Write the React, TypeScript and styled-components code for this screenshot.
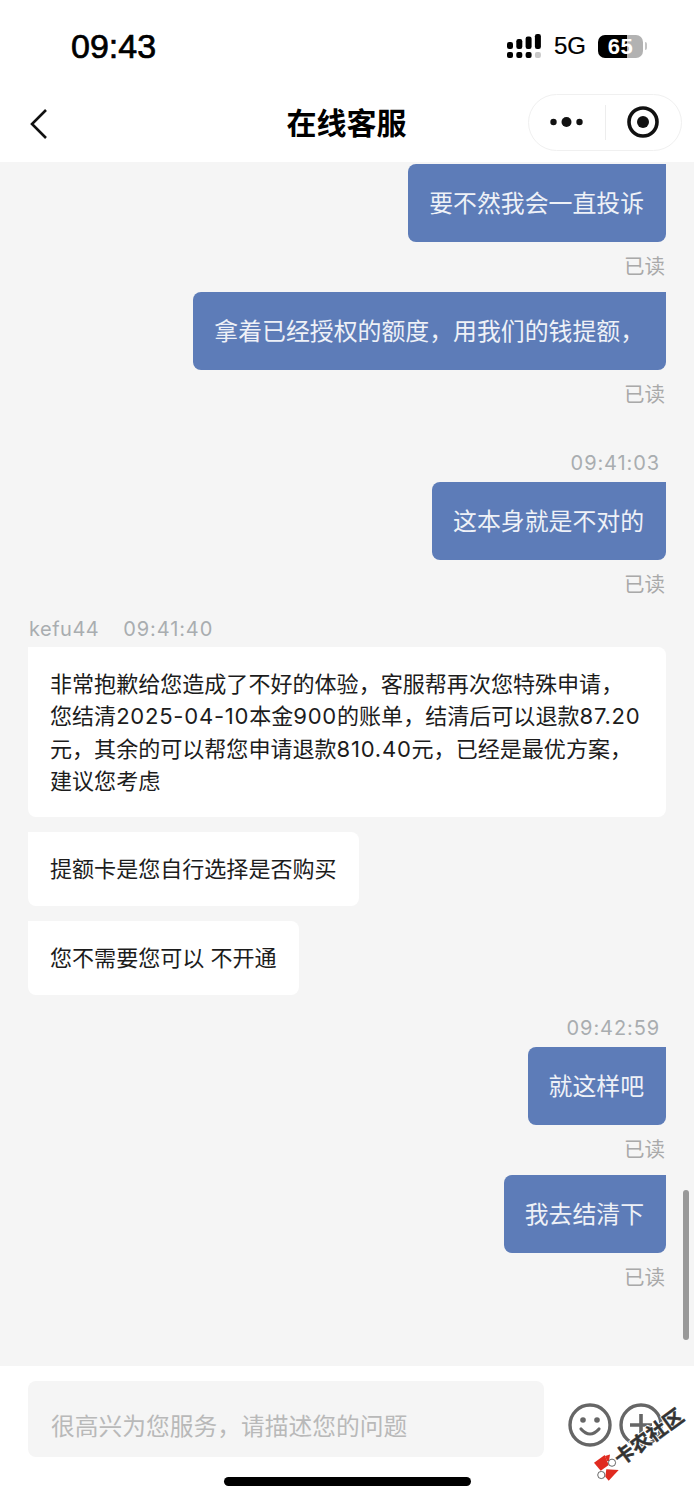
import React from 'react';
import styled, { createGlobalStyle } from 'styled-components';

const Global = createGlobalStyle`
  html, body { margin: 0; padding: 0; background: #fff; }
  * { box-sizing: border-box; }
  body { font-family: "Liberation Sans", "Noto Sans CJK SC", sans-serif; }
`;

const Page = styled.div`
  position: relative;
  width: 694px;
  height: 1500px;
  overflow: hidden;
  display: flex;
  flex-direction: column;
  background: #fff;
`;

const StatusBar = styled.div`
  height: 85px;
  flex: none;
  display: flex;
  align-items: flex-start;
  justify-content: space-between;
  padding: 28px 47px 0 71px;
`;

const Clock = styled.div`
  font-size: 34px;
  line-height: 36px;
  font-weight: 400;
  color: #000;
  -webkit-text-stroke: 0.7px #000;
  font-family: "Liberation Sans", sans-serif;
`;

const StatusRight = styled.div`
  display: flex;
  align-items: center;
  gap: 12px;
  height: 36px;
`;

const NetLabel = styled.span`
  font-size: 24px;
  color: #000;
  line-height: 36px;
  -webkit-text-stroke: 0.2px #000;
`;

const Battery = styled.div`
  position: relative;
  width: 45px;
  height: 23px;
  border-radius: 7px;
  overflow: hidden;
  background: linear-gradient(to right, #000 0 29px, #b2b2b2 29px);
  color: #fff;
  font-size: 22px;
  line-height: 23px;
  font-weight: 700;
  text-align: center;
  letter-spacing: 0.5px;
`;

const BatteryWrap = styled.div`
  display: flex;
  align-items: center;
  gap: 2px;
`;

const BatteryCap = styled.div`
  width: 2px;
  height: 8px;
  border-radius: 0 2px 2px 0;
  background: #c4c4c4;
`;

const NavBar = styled.div`
  position: relative;
  height: 77px;
  flex: none;
  display: flex;
  align-items: center;
  justify-content: space-between;
  padding: 0 12px 0 29px;
`;

const Title = styled.div`
  position: absolute;
  left: 0;
  right: 1px;
  top: 18px;
  text-align: center;
  font-size: 30px;
  line-height: 42px;
  font-weight: 700;
  color: #000;
`;

const Capsule = styled.div`
  width: 154px;
  height: 57px;
  margin-top: -3px;
  border: 1px solid #f0f0f0;
  border-radius: 29px;
  display: flex;
  align-items: center;
`;

const CapsuleSide = styled.div`
  flex: 1;
  height: 100%;
  display: flex;
  align-items: center;
  justify-content: center;
`;

const CapsuleDivider = styled.div`
  width: 1px;
  height: 35px;
  background: #ededed;
`;

const Chat = styled.div`
  flex: 1;
  min-height: 0;
  overflow: hidden;
  background: #f5f5f5;
  padding: 2px 28px 0;
  display: flex;
  flex-direction: column;
`;

const Bubble = styled.div<{ $top?: number }>`
  align-self: flex-end;
  background: #5d7cb8;
  color: #eef1f7;
  font-size: 23.89px;
  line-height: 34px;
  height: 78px;
  padding: 23px 22px 21px 21px;
  border-radius: 8px 0 8px 8px;
  margin-top: ${(p) => p.$top ?? 0}px;
  white-space: nowrap;
`;

const ReadMark = styled.div`
  align-self: flex-end;
  color: #a9a9a9;
  font-size: 20.5px;
  line-height: 24px;
  margin-top: 13px;
  margin-right: 1px;
`;

const TimeStamp = styled.div<{ $top: number }>`
  align-self: flex-end;
  color: #a9adb0;
  font-family: Inter, "Noto Sans CJK SC", sans-serif;
  font-size: 20px;
  line-height: 24px;
  letter-spacing: 0.9px;
  margin-top: ${(p) => p.$top}px;
  margin-right: 6px;
  margin-bottom: 7px;
`;

const AgentMeta = styled.div`
  display: flex;
  gap: 24px;
  color: #a9adb0;
  font-family: Inter, "Noto Sans CJK SC", sans-serif;
  font-size: 20px;
  line-height: 24px;
  letter-spacing: 0.5px;
  margin-top: 20px;
  margin-bottom: 6px;
  padding-left: 1px;
`;

const AgentTime = styled.span`
  letter-spacing: 0.9px;
`;

const AgentBubble = styled.div<{ $wide?: boolean; $top?: number }>`
  align-self: flex-start;
  ${(p) => (p.$wide ? 'width: 638px;' : '')}
  background: #fff;
  color: #1c1c1c;
  font-family: Inter, "Noto Sans CJK SC", sans-serif;
  font-size: 22.05px;
  line-height: 32.4px;
  padding: ${(p) => (p.$wide ? '21px 22px 19.4px' : '21px 22px 20.6px 22px')};
  border-radius: 0 8px 8px 8px;
  margin-top: ${(p) => p.$top ?? 0}px;
  white-space: nowrap;
`;

const Num = styled.span`
  letter-spacing: 0.75px;
`;

const InputBar = styled.div`
  flex: none;
  height: 134px;
  background: #fff;
  padding: 15px 0 0 28px;
  display: flex;
  align-items: flex-start;
`;

const InputBox = styled.div`
  width: 516px;
  height: 76px;
  border-radius: 8px;
  background: #f5f5f5;
  color: #b9b9b9;
  font-size: 23.75px;
  line-height: 92px;
  padding-left: 23px;
  white-space: nowrap;
`;

const InputIcons = styled.div`
  display: flex;
  gap: 7px;
  margin: 22px 0 0 24px;
`;

const ScrollThumb = styled.div`
  position: absolute;
  left: 683px;
  top: 1190px;
  width: 6px;
  height: 150px;
  border-radius: 3px;
  background: #999;
`;

const HomeBar = styled.div`
  position: absolute;
  left: 224px;
  top: 1477px;
  width: 247px;
  height: 9px;
  border-radius: 5px;
  background: #000;
`;

const Watermark = styled.div`
  position: absolute;
  left: 590px;
  top: 1405px;
  width: 104px;
  height: 90px;
  pointer-events: none;
`;

const WatermarkText = styled.div`
  position: absolute;
  left: 19px;
  top: 21px;
  width: 80px;
  font-size: 20px;
  line-height: 22px;
  font-weight: 700;
  color: #333;
  white-space: nowrap;
  transform: rotate(-36deg);
  -webkit-text-stroke: 0.4px #333;
  text-shadow: 1px 1px 0 #fff, -1px -1px 0 #fff, 1px -1px 0 #fff, -1px 1px 0 #fff;
`;

const WatermarkLogoSvg = styled.svg`
  position: absolute;
  left: 3px;
  top: 47px;
`;

const Signal = () => (
  <svg width="35" height="24" viewBox="0 0 35 24">
    {[0, 1, 2, 3].map((i) => (
      <rect key={`b${i}`} x={i * 9.3} y={18} width="6" height="6" rx="2" fill={i === 3 ? '#c8c8c8' : '#000'} />
    ))}
    <rect x="0" y="8" width="6" height="7" rx="2.2" fill="#000" />
    <rect x="9.3" y="5" width="6" height="10" rx="2.2" fill="#000" />
    <rect x="18.6" y="2.5" width="6" height="12.5" rx="2.2" fill="#000" />
    <rect x="27.9" y="0" width="6" height="15" rx="2.2" fill="#000" />
  </svg>
);

const Back = () => (
  <svg width="22" height="34" viewBox="0 0 22 34">
    <path d="M17 3 L3 17 L17 31" fill="none" stroke="#111" strokeWidth="2.6" />
  </svg>
);

const More = () => (
  <svg width="33" height="12" viewBox="0 0 33 12">
    <circle cx="3.5" cy="6" r="3.2" fill="#111" />
    <circle cx="16.5" cy="6" r="5" fill="#111" />
    <circle cx="29.5" cy="6" r="3.2" fill="#111" />
  </svg>
);

const Target = () => (
  <svg width="34" height="34" viewBox="0 0 34 34">
    <circle cx="17" cy="17" r="14" fill="none" stroke="#111" strokeWidth="3.6" />
    <circle cx="17" cy="17" r="6" fill="#111" />
  </svg>
);

const Smile = () => (
  <svg width="44" height="44" viewBox="0 0 44 44">
    <circle cx="22" cy="22" r="20" fill="none" stroke="#666" strokeWidth="3.4" />
    <circle cx="15" cy="17" r="2.8" fill="#666" />
    <circle cx="29" cy="17" r="2.8" fill="#666" />
    <path d="M13 26 Q22 36 31 26" fill="none" stroke="#666" strokeWidth="3.2" strokeLinecap="round" />
  </svg>
);

const Plus = () => (
  <svg width="44" height="44" viewBox="0 0 44 44">
    <circle cx="22" cy="22" r="20" fill="none" stroke="#666" strokeWidth="3.4" />
    <path d="M22 11 V33 M11 22 H33" stroke="#666" strokeWidth="3.6" />
  </svg>
);

const WatermarkLogo = () => (
  <WatermarkLogoSvg width="30" height="32" viewBox="0 0 30 32">
    <path d="M1 10.7 L11.7 3 L15.7 13 L7.7 18.7 Z" fill="#e02b20" />
    <path d="M12 4 L17 2.5 L16 9 L14 9 Z" fill="#e02b20" />
    <path d="M13.3 17.3 L25.7 18 L21 23 L15.7 28.7 L12.3 24.7 Z" fill="#e02b20" />
    <circle cx="19" cy="10.7" r="3.6" fill="#fff" stroke="#444" strokeWidth="0.8" />
    <circle cx="8.3" cy="23" r="3.6" fill="#fff" stroke="#444" strokeWidth="0.8" />
  </WatermarkLogoSvg>
);

export default function App() {
  return (
    <Page>
      <Global />
      <StatusBar>
        <Clock>09:43</Clock>
        <StatusRight>
          <Signal />
          <NetLabel>5G</NetLabel>
          <BatteryWrap>
            <Battery>65</Battery>
            <BatteryCap />
          </BatteryWrap>
        </StatusRight>
      </StatusBar>
      <NavBar>
        <Back />
        <Title>在线客服</Title>
        <Capsule>
          <CapsuleSide><More /></CapsuleSide>
          <CapsuleDivider />
          <CapsuleSide><Target /></CapsuleSide>
        </Capsule>
      </NavBar>
      <Chat>
        <Bubble>要不然我会一直投诉</Bubble>
        <ReadMark>已读</ReadMark>
        <Bubble $top={13}>拿着已经授权的额度，用我们的钱提额，</Bubble>
        <ReadMark>已读</ReadMark>
        <TimeStamp $top={44}>09:41:03</TimeStamp>
        <Bubble>这本身就是不对的</Bubble>
        <ReadMark>已读</ReadMark>
        <AgentMeta><span>kefu44</span><AgentTime>09:41:40</AgentTime></AgentMeta>
        <AgentBubble $wide>
          非常抱歉给您造成了不好的体验，客服帮再次您特殊申请，<br />
          您结清<Num>2025-04-10</Num>本金<Num>900</Num>的账单，结清后可以退款<Num>87.20</Num><br />
          元，其余的可以帮您申请退款<Num>810.40</Num>元，已经是最优方案，<br />
          建议您考虑
        </AgentBubble>
        <AgentBubble $top={15}>提额卡是您自行选择是否购买</AgentBubble>
        <AgentBubble $top={15}>您不需要您可以 不开通</AgentBubble>
        <TimeStamp $top={21}>09:42:59</TimeStamp>
        <Bubble>就这样吧</Bubble>
        <ReadMark>已读</ReadMark>
        <Bubble $top={13}>我去结清下</Bubble>
        <ReadMark>已读</ReadMark>
      </Chat>
      <InputBar>
        <InputBox>很高兴为您服务，请描述您的问题</InputBox>
        <InputIcons>
          <Smile />
          <Plus />
        </InputIcons>
      </InputBar>
      <ScrollThumb />
      <HomeBar />
      <Watermark>
        <WatermarkLogo />
        <WatermarkText>卡农社区</WatermarkText>
      </Watermark>
    </Page>
  );
}
